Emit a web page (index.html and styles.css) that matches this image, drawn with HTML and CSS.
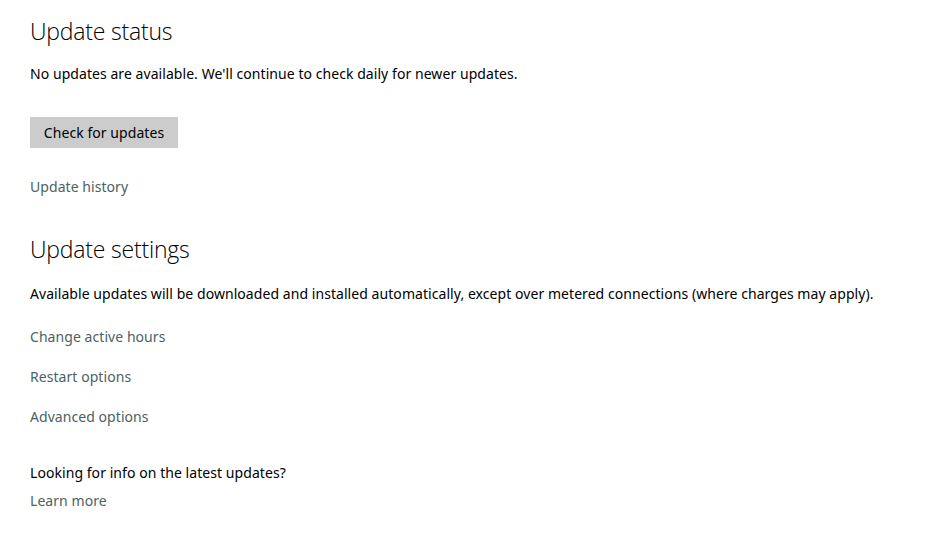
FILE: index.html
```html
<!DOCTYPE html>
<html>
<head>
<meta charset="utf-8">
<link rel="stylesheet" href="styles.css">
</head>
<body>
<main class="page">
  <h1 class="heading">Update status</h1>
  <p class="text t-status">No updates are available. We'll continue to check daily for newer updates.</p>
  <button class="btn">Check for updates</button>
  <a class="link l-history">Update history</a>

  <h1 class="heading h-settings">Update settings</h1>
  <p class="text t-settings">Available updates will be downloaded and installed automatically, except over metered connections (where charges may apply).</p>
  <a class="link l-first">Change active hours</a>
  <a class="link l-next">Restart options</a>
  <a class="link l-next">Advanced options</a>

  <p class="text t-looking">Looking for info on the latest updates?</p>
  <a class="link l-learn">Learn more</a>
</main>
</body>
</html>
```
FILE: styles.css
```css
html, body {
  margin: 0;
  padding: 0;
  background: #ffffff;
}
.page {
  display: flex;
  flex-direction: column;
  align-items: flex-start;
  padding: 16px 0 0 30px;
  font-family: "Noto Sans", "Open Sans", sans-serif;
  font-size: 14px;
  letter-spacing: 0.06px;
  color: #000;
}
.heading {
  margin: 0;
  font-family: "Open Sans", sans-serif;
  font-weight: 300;
  font-size: 23px;
  line-height: 30px;
  letter-spacing: -0.2px;
  color: #000;
}
.text {
  margin: 0;
  line-height: 20px;
}
.t-status { margin-top: 18px; }
.btn {
  margin-top: 33px;
  width: 148px;
  height: 31px;
  border: none;
  background: #cccccc;
  font-family: inherit;
  font-size: 14px;
  letter-spacing: inherit;
  color: #000;
  padding: 0;
}
.link {
  display: block;
  line-height: 20px;
  color: #4d6262;
  text-decoration: none;
}
.l-history { margin-top: 29px; }
.h-settings { margin-top: 37px; }
.t-settings { margin-top: 20px; }
.l-first { margin-top: 23px; }
.l-next { margin-top: 20px; }
.t-looking { margin-top: 36px; }
.l-learn { margin-top: 8px; }
```
